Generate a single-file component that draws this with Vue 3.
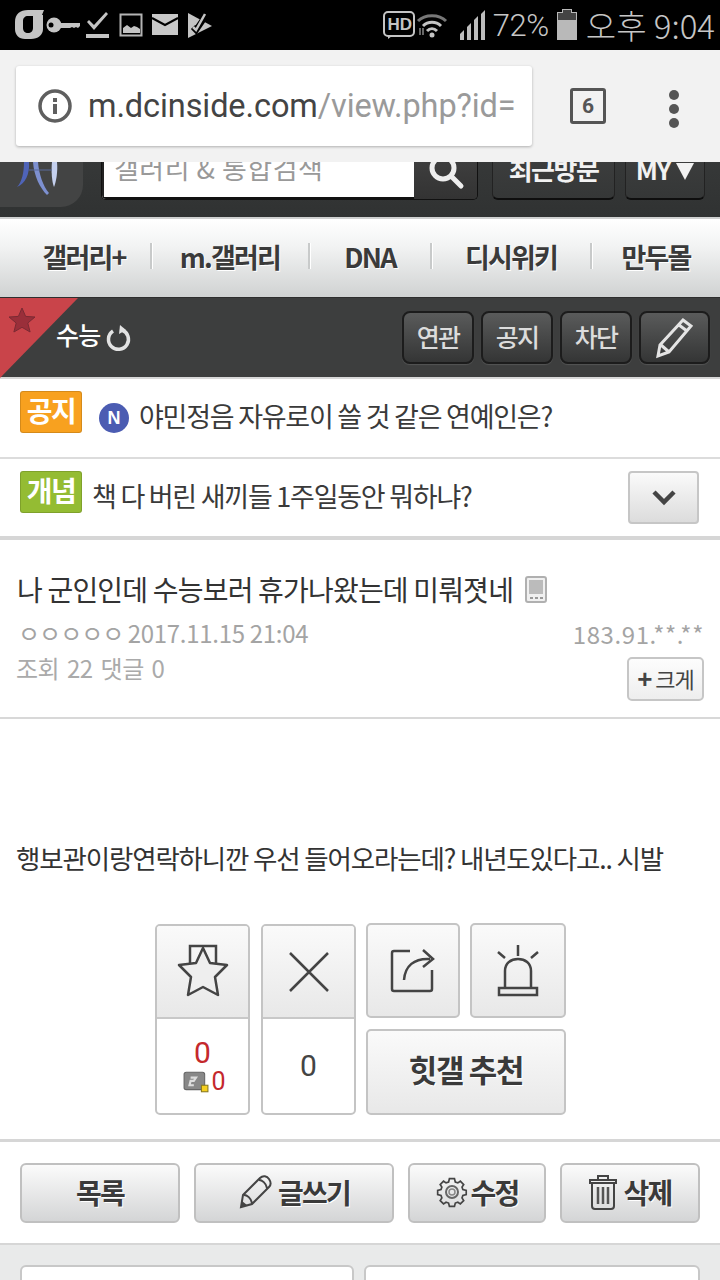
<script setup>
const gnb = ['갤러리+', 'm.갤러리', 'DNA', '디시위키', '만두몰']
const tools = ['연관', '공지', '차단']
</script>

<template>
  <div class="page">
    <div class="status">
      <svg class="st-left" width="215" height="50" viewBox="0 0 215 50">
        <path d="M15 22C15 14 20 10 28 10H44L42 15H43V29C43 35 38 39 31 39H25C19 39 15 35 15 29ZM23 21C23 18 25 16 28 16H33V28C33 31 31 33 28 33C25 33 23 31 23 28Z" fill="#c4c4c4" fill-rule="evenodd"/>
        <circle cx="54" cy="25" r="7.500" fill="#c4c4c4"/><circle cx="51" cy="25" r="2.500" fill="#000"/>
        <path d="M60 23h20v3l-2 2-2-1-2 1-2-1-2 1h-10z" fill="#c4c4c4"/>
        <path d="M87 22l2-2 5 5 12-13 2 2-14 16zM86 34h23v4H86z" fill="#c4c4c4"/>
        <rect x="120.500" y="14.500" width="21" height="21" fill="none" stroke="#b4b4b4" stroke-width="2"/>
        <path d="M123 33v-5l4-3 4 3 3-2 3 1 3 2v4z" fill="#c4c4c4"/>
        <path d="M152 14h26v21h-26z" fill="#c8c8c8"/><path d="M152 18l13 7 13-7" fill="none" stroke="#000" stroke-width="2"/>
        <path d="M188 13l24 13-24 12z" fill="#c4c4c4"/>
        <path d="M193 27l3 3 9-13" fill="none" stroke="#000" stroke-width="6"/><path d="M193 27l3 3 9-16" fill="none" stroke="#c4c4c4" stroke-width="2.500"/>
      </svg>
      <div class="st-right">
        <svg width="109" height="50" viewBox="0 0 109 50">
          <rect x="2" y="12" width="30" height="24" rx="4" fill="none" stroke="#c4c4c4" stroke-width="2"/>
          <path d="M6 36v3l4-3z" fill="#c4c4c4"/>
          <text x="5.500" y="30" class="hd">HD</text>
          <path d="M36 21c7-7 21-7 28 0" fill="none" stroke="#777" stroke-width="3"/>
          <path d="M41 26c5-5 13-5 18 0M45 31c3-3 7-3 10 0" fill="none" stroke="#c4c4c4" stroke-width="3"/>
          <circle cx="50" cy="35" r="2.500" fill="#c4c4c4"/>
          <path d="M38 28v7M41 28v7" stroke="#666" stroke-width="2"/>
          <path d="M78 40v-6l4-4v10zM85 40V27l4-4v17zM92 40V20l4-4v24zM99 40V14l4-4v30z" fill="#bdbdbd"/>
        </svg>
        <span class="pct">72%</span>
        <svg width="24" height="50" viewBox="0 0 24 50">
          <path d="M7 9h10v3h5v28H2V12h5z" fill="#b9b9b9"/>
          <path d="M8 10h8v3h5v7H3v-7h5z" fill="#444"/>
        </svg>
        <span class="time">오후 9:04</span>
      </div>
    </div>

    <div class="urlbar">
      <div class="omnibox">
        <svg width="36" height="36" viewBox="0 0 36 36">
          <circle cx="18" cy="18" r="15" fill="none" stroke="#5f5f5f" stroke-width="3.500"/>
          <rect x="16" y="16" width="4" height="10" fill="#5f5f5f"/><rect x="16" y="10" width="4" height="4" fill="#5f5f5f"/>
        </svg>
        <span class="url"><b>m.dcinside.com</b>/view.php?id=</span>
      </div>
      <div class="tabs">6</div>
      <div class="dots"><i></i><i></i><i></i></div>
    </div>

    <header class="top">
      <div class="logo">
        <svg width="50" height="36" viewBox="0 0 50 36">
          <path d="M10 0C10 10 8 20 3 25C11 22 16 12 15 0z" fill="#4f64b8"/>
          <path d="M19 0C20 14 26 26 33 33L35 31C29 24 25 12 24 0z" fill="#7d90d0"/>
          <path d="M38 0H43C44 10 42 20 40 25C38 20 37 10 38 0z" fill="#c4d0ee"/>
          <path d="M15 8h23" stroke="#5a6a9a" stroke-width="1"/>
        </svg>
      </div>
      <div class="search">
        <div class="search-input">갤러리 &amp; 통합검색</div>
        <div class="search-btn">
          <svg width="40" height="40" viewBox="0 0 40 40">
            <circle cx="17" cy="13" r="11" fill="none" stroke="#eee" stroke-width="5"/>
            <path d="M25 21l10 10" stroke="#eee" stroke-width="5" stroke-linecap="round"/>
          </svg>
        </div>
      </div>
      <div class="top-btn recent">최근방문</div>
      <div class="top-btn my">MY<span class="tri"></span></div>
    </header>

    <nav class="gnb">
      <div v-for="g in gnb" :key="g" class="gnb-item"><span>{{ g }}</span></div>
    </nav>

    <section class="sub">
      <div class="corner">
        <svg width="78" height="80" viewBox="0 0 78 80">
          <path d="M0 0h78L0 80z" fill="#c9444a"/>
          <path d="M22 10l3.600 8.400 9.400.6-7.200 6 2.300 9L22 29.300 13.900 34l2.300-9L9 19l9.400-.6z" fill="#9a2f3a" stroke="#7a2a33" stroke-width="1"/>
        </svg>
      </div>
      <span class="sub-title">수능</span>
      <svg class="refresh" width="28" height="28" viewBox="0 0 28 28">
        <path d="M8 7a10 10 0 1 0 9-1" fill="none" stroke="#e2e2e2" stroke-width="3.500"/>
        <path d="M15 1l6 5-7 4z" fill="#e2e2e2"/>
      </svg>
      <div class="sub-tools">
        <div v-for="t in tools" :key="t" class="tool">{{ t }}</div>
        <div class="tool tool-pen">
          <svg width="40" height="42" viewBox="0 0 40 42">
            <path d="M28 3l8 6-22 26-11 4 2-11zM6 28l8 7M24 8l8 6" fill="none" stroke="#e4e4e4" stroke-width="3"/>
          </svg>
        </div>
      </div>
    </section>

    <div class="notice first">
      <span class="badge orange">공지</span>
      <span class="n-mark">N</span>
      <span class="notice-text">야민정음 자유로이 쓸 것 같은 연예인은?</span>
    </div>
    <div class="notice second">
      <span class="badge green">개념</span>
      <span class="notice-text">책 다 버린 새끼들 1주일동안 뭐하냐?</span>
      <div class="more">
        <svg width="28" height="20" viewBox="0 0 28 20"><path d="M4 4l10 10L24 4" fill="none" stroke="#444" stroke-width="4.500"/></svg>
      </div>
    </div>

    <section class="post-head">
      <h1 class="title">나 군인인데 수능보러 휴가나왔는데 미뤄졋네
        <svg class="phone" width="22" height="27" viewBox="0 0 22 27">
          <rect x="1" y="1" width="20" height="25" rx="2" fill="#f0f0f0" stroke="#b0b0b0" stroke-width="2"/>
          <rect x="4" y="4" width="14" height="14" fill="#bbb"/>
          <path d="M5 22h3M10 22h3M15 22h3" stroke="#999" stroke-width="2"/>
        </svg>
      </h1>
      <div class="meta">
        <div class="meta-left">
          <div class="meta-line">ㅇㅇㅇㅇㅇ <span class="date">2017.11.15 21:04</span></div>
          <div class="meta-line second-line">조회 22 댓글 0</div>
        </div>
        <div class="meta-right">
          <div class="ip">183.91.**.**</div>
          <div class="bigger"><b>+</b> 크게</div>
        </div>
      </div>
    </section>

    <section class="body-text">행보관이랑연락하니깐 우선 들어오라는데? 내년도있다고.. 시발</section>

    <section class="reco">
      <div class="vote">
        <div class="vote-top">
          <svg width="54" height="58" viewBox="0 0 54 58">
            <path d="M14 22V3h26v19" fill="none" stroke="#444" stroke-width="2.500"/>
            <path d="M27 5l7 15 17 2-12 12 3 18-15-8-15 8 3-18L3 22l17-2z" fill="#eee" stroke="#444" stroke-width="2.500" stroke-linejoin="round"/>
          </svg>
        </div>
        <div class="vote-bottom">
          <span class="count red">0</span>
          <span class="sub-count">
            <svg width="26" height="22" viewBox="0 0 24 20">
              <rect x="1" y="1" width="19" height="16" rx="2" fill="#888" stroke="#666"/>
              <path d="M7 6h5l-2 3H7l-1 4h4" fill="none" stroke="#ddd" stroke-width="2"/>
              <rect x="17" y="13" width="6" height="6" fill="#f5cf1f" stroke="#8a7a20"/>
            </svg>
            <span class="red small">0</span>
          </span>
        </div>
      </div>
      <div class="vote">
        <div class="vote-top">
          <svg width="44" height="44" viewBox="0 0 44 44"><path d="M3 3l38 38M41 3L3 41" stroke="#444" stroke-width="2.500"/></svg>
        </div>
        <div class="vote-bottom"><span class="count dark">0</span></div>
      </div>
      <div class="reco-side">
        <div class="reco-icons">
          <div class="reco-btn share">
            <svg width="46" height="46" viewBox="0 0 46 46">
              <path d="M20 3H4a2 2 0 0 0-2 2v36a2 2 0 0 0 2 2h36a2 2 0 0 0 2-2V22" fill="none" stroke="#444" stroke-width="2.500"/>
              <path d="M14 32c1-14 10-22 26-21M33 2l10 9-10 8" fill="none" stroke="#444" stroke-width="2.500"/>
            </svg>
          </div>
          <div class="reco-btn siren">
            <svg width="44" height="54" viewBox="0 0 44 54">
              <path d="M22 1v11M2 8l7 6M42 8l-7 6" stroke="#444" stroke-width="2.500"/>
              <path d="M9 43V27c0-8 6-12 13-12s13 4 13 12v16" fill="none" stroke="#444" stroke-width="2.500"/>
              <path d="M3 44h38v7H3z" fill="none" stroke="#444" stroke-width="2.500"/>
            </svg>
          </div>
        </div>
        <div class="reco-btn hit">힛갤 추천</div>
      </div>
    </section>

    <section class="actions">
      <div class="act list">목록</div>
      <div class="act write">
        <svg width="34" height="34" viewBox="0 0 34 34">
          <path d="M5 20L22 3C25 0 29 1 31 4C33 7 33 10 31 12L14 29L3 32ZM6 20c3 0 7 3 8 8M21 5c3 0 7 3 8 8" fill="none" stroke="#444" stroke-width="2"/>
          <path d="M3 32l1-6 5 4z" fill="#444"/>
        </svg>
        글쓰기
      </div>
      <div class="act edit">
        <svg width="32" height="32" viewBox="0 0 32 32">
          <path d="M13 2h6l1 4 3 1 3-2 4 4-2 3 1 3 4 1v5l-4 1-1 3 2 3-4 4-3-2-3 1-1 4h-6l-1-4-3-1-3 2-4-4 2-3-1-3-4-1v-5l4-1 1-3-2-3 4-4 3 2 3-1z" transform="translate(2.500 1) scale(.84)" fill="none" stroke="#444" stroke-width="2"/>
          <circle cx="16" cy="16" r="6" fill="none" stroke="#666" stroke-width="2"/>
          <circle cx="16" cy="16" r="3" fill="none" stroke="#888" stroke-width="1.500"/>
        </svg>
        수정
      </div>
      <div class="act del">
        <svg width="28" height="36" viewBox="0 0 28 36">
          <path d="M9 5V2h10v3M1 6h26v3H1zM3 10v22a3 3 0 0 0 3 3h16a3 3 0 0 0 3-3V10" fill="none" stroke="#444" stroke-width="2"/>
          <path d="M9 13v17M14 13v17M19 13v17" stroke="#555" stroke-width="2.500"/>
        </svg>
        삭제
      </div>
    </section>

    <section class="foot">
      <div class="foot-card"></div>
      <div class="foot-card wide"></div>
    </section>
  </div>
</template>

<style scoped>
.page {
  width: 720px;
  height: 1280px;
  overflow: hidden;
  background: #fff;
  font-family: "Noto Sans CJK KR", "Noto Sans", sans-serif;
  color: #333;
}
.status {
  height: 50px;
  background: #000;
  display: flex;
  justify-content: space-between;
}
.st-left { display: block; }
.st-right {
  display: flex;
  align-items: center;
  color: #c6c6c6;
  padding-right: 5px;
}
.hd { font: 700 17px "Liberation Sans", sans-serif; fill: #c4c4c4; }
.pct {
  font: 300 31px Roboto, sans-serif;
  letter-spacing: -0.5px;
  margin-left: 2px;
  width: 62px;
  white-space: nowrap;
}
.time {
  font-size: 33px;
  font-weight: 300;
  margin-left: 7px;
  line-height: 50px;
  white-space: nowrap;
}
.urlbar {
  height: 112px;
  background: #f2f2f2;
  display: flex;
  align-items: flex-start;
  position: relative;
  z-index: 2;
}
.omnibox {
  margin: 16px 0 0 16px;
  width: 516px;
  height: 80px;
  background: #fff;
  border-radius: 3px;
  box-shadow: 0 1px 3px rgba(0, 0, 0, .28);
  display: flex;
  align-items: center;
  padding-left: 21px;
  box-sizing: border-box;
}
.url {
  font: 400 32.500px Roboto, sans-serif;
  color: #9a9a9a;
  margin-left: 15px;
  white-space: nowrap;
  letter-spacing: -0.1px;
}
.url b { font-weight: 400; color: #444; }
.tabs {
  width: 36px;
  height: 36px;
  box-sizing: border-box;
  border: 3px solid #555;
  border-radius: 3px;
  margin: 38px 0 0 38px;
  font: 700 21px/30px Roboto, sans-serif;
  color: #555;
  text-align: center;
}
.dots {
  margin: 40px 0 0 63px;
  display: flex;
  flex-direction: column;
  gap: 4px;
}
.dots i {
  width: 10px;
  height: 10px;
  border-radius: 50%;
  background: #555;
}
.top {
  height: 55px;
  box-sizing: border-box;
  padding-bottom: 17px;
  background: linear-gradient(#363838, #303232);
  display: flex;
  align-items: flex-end;
  overflow: hidden;
}
.logo {
  width: 83px;
  height: 70px;
  flex: none;
  margin-bottom: -7px;
  background: #434444;
  border-radius: 0 22px 22px 0;
  box-sizing: border-box;
  padding: 25px 0 0 14px;
  line-height: 0;
}
.search {
  margin-left: 18px;
  flex: none;
  display: flex;
  height: 60px;
  width: 377px;
  border: 1px solid #111;
  border-top: 0;
  border-radius: 0 0 5px 5px;
  box-sizing: border-box;
  overflow: hidden;
}
.search-input {
  width: 312px;
  flex: none;
  background: #fff;
  box-sizing: border-box;
  border-left: 2px solid #222;
  border-bottom: 2px solid #111;
  color: #999;
  font-size: 27px;
  line-height: 36px;
  padding: 10px 0 0 10px;
  letter-spacing: 0.500px;
  white-space: nowrap;
}
.search-btn {
  flex: 1;
  background: linear-gradient(#444, #333);
  padding: 15px 0 0 12px;
  box-sizing: border-box;
}
.top-btn {
  height: 60px;
  box-sizing: border-box;
  border: 1px solid #222;
  border-bottom: 2px solid #0e0e0e;
  border-radius: 6px;
  background: linear-gradient(#3f4040, #353737);
  color: #f2f2f2;
  font-weight: 700;
  font-size: 26px;
  line-height: 34px;
  padding-top: 11px;
  text-align: center;
  flex: none;
  letter-spacing: -1.500px;
  white-space: nowrap;
}
.recent { width: 123px; margin-left: 14px; }
.my { width: 80px; margin-left: 10px; font-size: 26px; }
.tri {
  display: inline-block;
  width: 0;
  height: 0;
  margin-left: 6px;
  border-left: 9px solid transparent;
  border-right: 9px solid transparent;
  border-top: 17px solid #f2f2f2;
  vertical-align: 0;
}
.gnb {
  height: 80px;
  box-sizing: border-box;
  border-top: 2px solid #cfd0d0;
  background: linear-gradient(#fff 0%, #f2f3f3 35%, #d0d2d2 100%);
  display: grid;
  grid-template-columns: 150px 158px 122px 160px 130px;
  align-items: center;
  padding-bottom: 4px;
}
.gnb-item {
  height: 26px;
  display: flex;
  align-items: center;
  justify-content: center;
  border-left: 2px solid #c8caca;
  box-shadow: inset 1px 0 0 #fff;
}
.gnb-item:first-child { border-left: 0; box-shadow: none; padding-left: 18px; }
.gnb-item span {
  font-size: 27px;
  font-weight: 700;
  color: #3a3a3a;
  letter-spacing: -1.800px;
  text-shadow: 1px 1px 0 #fff;
  white-space: nowrap;
}
.sub {
  height: 82px;
  box-sizing: border-box;
  border-top: 1px solid #2e2e2e;
  border-bottom: 2px solid #d8d8d8;
  background: #3d3e3e;
  position: relative;
  display: flex;
  align-items: center;
  padding: 0 10px 0 56px;
}
.corner { position: absolute; left: 0; top: 0; line-height: 0; }
.sub-title {
  color: #fff;
  font-size: 25px;
  font-weight: 500;
  letter-spacing: -0.800px;
  position: relative;
  top: -4px;
}
.refresh { margin-left: 5px; }
.sub-tools { margin-left: auto; display: flex; gap: 7px; }
.tool {
  width: 72px;
  height: 53px;
  box-sizing: border-box;
  border: 2px solid #1c1c1c;
  border-radius: 8px;
  background: linear-gradient(#5a5b5b, #343535);
  box-shadow: 0 1px 1px rgba(255, 255, 255, .12);
  color: #dcdcdc;
  font-size: 25px;
  font-weight: 500;
  letter-spacing: -1.800px;
  display: flex;
  align-items: center;
  justify-content: center;
  padding-bottom: 3px;
}
.tool-pen { width: 71px; padding-bottom: 0; }
.notice {
  display: flex;
  box-sizing: border-box;
  padding-left: 20px;
}
.notice.first { height: 80px; padding-top: 12px; border-bottom: 2px solid #dcdcdc; }
.notice.second { height: 81px; padding-top: 12px; border-bottom: 4px solid #d6d6d6; }
.badge {
  width: 62px;
  height: 42px;
  flex: none;
  box-sizing: border-box;
  border: 1px solid rgba(0, 0, 0, .14);
  border-radius: 3px;
  color: #fff;
  font-weight: 700;
  font-size: 28px;
  line-height: 36px;
  text-align: center;
  letter-spacing: -1.500px;
}
.orange { background: #f8a11f; }
.green { background: #94bc33; }
.n-mark {
  width: 30px;
  height: 30px;
  flex: none;
  margin: 12px 0 0 17px;
  border-radius: 50%;
  background: #4b5cb2;
  color: #fff;
  font: 700 18px/30px "Liberation Sans", sans-serif;
  text-align: center;
}
.notice-text {
  font-size: 27px;
  color: #3a3a3a;
  letter-spacing: -1.250px;
  line-height: 50px;
  margin-left: 10px;
  white-space: nowrap;
}
.more {
  margin-left: auto;
  margin-right: 21px;
  width: 71px;
  height: 53px;
  box-sizing: border-box;
  border: 2px solid #c6c6c6;
  border-radius: 4px;
  background: linear-gradient(#fafafa, #dcdcdc);
  display: flex;
  align-items: center;
  justify-content: center;
}
.post-head {
  height: 179px;
  box-sizing: border-box;
  border-bottom: 2px solid #d8d8d8;
  padding: 27px 16px 0;
}
.title {
  margin: 0;
  font-size: 28px;
  font-weight: 400;
  line-height: 44px;
  color: #333;
  letter-spacing: -0.800px;
  white-space: nowrap;
  padding-left: 1px;
  display: flex;
  align-items: center;
  gap: 12px;
}
.meta {
  display: flex;
  justify-content: space-between;
  color: #a4a4a4;
  font-size: 24px;
  letter-spacing: -1px;
}
.meta-line { line-height: 36px; margin-top: 4px; white-space: nowrap; padding-left: 2px; }
.date { letter-spacing: -0.300px; }
.meta-line.second-line { margin-top: -1px; padding-left: 0; color: #aaa; letter-spacing: -0.500px; word-spacing: 3px; }
.meta-right { display: flex; flex-direction: column; align-items: flex-end; }
.ip { line-height: 36px; margin-top: 5px; letter-spacing: 0.600px; }
.bigger {
  width: 77px;
  height: 44px;
  margin-top: 5px;
  box-sizing: border-box;
  border: 2px solid #c6c6c6;
  border-radius: 5px;
  background: linear-gradient(#fdfdfd, #eee);
  color: #444;
  font-size: 22px;
  line-height: 39px;
  text-align: center;
  letter-spacing: -1px;
}
.bigger b { font-family: "Liberation Sans", sans-serif; font-size: 26px; }
.body-text {
  height: 205px;
  box-sizing: border-box;
  padding: 119px 0 0 16px;
  font-size: 26.500px;
  line-height: 40px;
  letter-spacing: -1.150px;
  color: #333;
  white-space: nowrap;
}
.reco {
  height: 218px;
  box-sizing: border-box;
  border-bottom: 3px solid #d6d6d6;
  display: flex;
  padding-left: 155px;
  gap: 11px;
  align-items: flex-start;
}
.vote {
  width: 95px;
  height: 191px;
  box-sizing: border-box;
  border: 2px solid #c4c4c4;
  border-radius: 5px;
  overflow: hidden;
}
.vote-top {
  height: 93px;
  background: linear-gradient(#fafafa, #e8e8e8);
  border-bottom: 2px solid #c8c8c8;
  display: flex;
  align-items: center;
  justify-content: center;
  box-sizing: border-box;
}
.vote-bottom {
  height: 94px;
  display: flex;
  flex-direction: column;
  align-items: center;
  justify-content: center;
}
.count { font: 400 30px/32px Roboto, sans-serif; }
.red { color: #c4282c; }
.dark { color: #444; }
.sub-count { display: flex; align-items: center; gap: 2px; height: 26px; margin-left: 4px; }
.small { font: 400 25px/26px Roboto, sans-serif; }
.reco-side {
  width: 200px;
  display: flex;
  flex-direction: column;
  gap: 11px;
  margin-left: -1px;
  margin-top: -1px;
}
.reco-icons { display: flex; gap: 10px; }
.reco-btn {
  box-sizing: border-box;
  border: 2px solid #c4c4c4;
  border-radius: 5px;
  background: linear-gradient(#fafafa, #e8e8e8);
  display: flex;
  align-items: center;
  justify-content: center;
}
.share { width: 94px; height: 95px; }
.siren { width: 96px; height: 95px; }
.hit {
  height: 86px;
  font-size: 31px;
  font-weight: 700;
  color: #3a3a3a;
  letter-spacing: -1.300px;
  padding-bottom: 8px;
  text-shadow: 1px 1px 0 #fff;
}
.actions {
  height: 103px;
  box-sizing: border-box;
  border-bottom: 2px solid #d6d6d6;
  display: flex;
  gap: 14px;
  padding: 21px 20px 0;
}
.act {
  height: 60px;
  box-sizing: border-box;
  border: 2px solid #c0c0c0;
  border-radius: 6px;
  background: linear-gradient(#fbfbfb, #d4d5d6);
  display: flex;
  align-items: center;
  justify-content: center;
  gap: 6px;
  font-size: 28px;
  font-weight: 700;
  color: #3a3a3a;
  letter-spacing: -1.800px;
  text-shadow: 1px 1px 0 #fff;
  padding-bottom: 3px;
}
.list { width: 160px; }
.write { width: 200px; }
.edit { width: 138px; gap: 3px; }
.del { width: 140px; gap: 7px; }
.foot {
  height: 40px;
  background: #e9eaea;
  display: flex;
  gap: 10px;
  padding: 20px 20px 0;
  box-sizing: border-box;
  overflow: hidden;
}
.foot-card {
  width: 334px;
  height: 60px;
  flex: none;
  background: #fff;
  border: 2px solid #c8c8c8;
  border-radius: 6px;
  box-sizing: border-box;
}
.foot-card.wide { width: 336px; }
</style>
